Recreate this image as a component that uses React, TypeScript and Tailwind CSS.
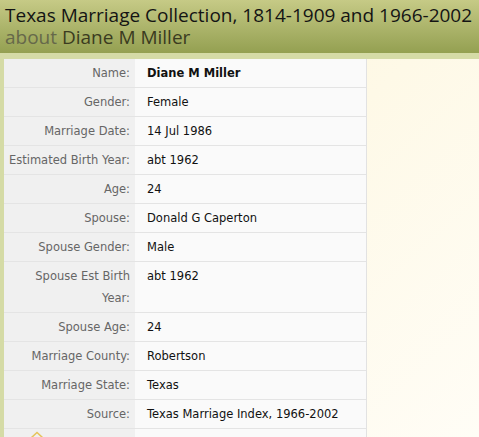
import React from 'react'

const rows: { label: string; value: string; bold?: boolean }[] = [
  { label: 'Name:', value: 'Diane M Miller', bold: true },
  { label: 'Gender:', value: 'Female' },
  { label: 'Marriage Date:', value: '14 Jul 1986' },
  { label: 'Estimated Birth Year:', value: 'abt 1962' },
  { label: 'Age:', value: '24' },
  { label: 'Spouse:', value: 'Donald G Caperton' },
  { label: 'Spouse Gender:', value: 'Male' },
  { label: 'Spouse Est Birth Year:', value: 'abt 1962' },
  { label: 'Spouse Age:', value: '24' },
  { label: 'Marriage County:', value: 'Robertson' },
  { label: 'Marriage State:', value: 'Texas' },
  { label: 'Source:', value: 'Texas Marriage Index, 1966-2002' },
]

export default function App() {
  return (
    <div className="w-[479px] h-[437px] overflow-hidden bg-gradient-to-br from-[#fdf5d8] to-[#fffdf6] font-['DejaVu_Sans',sans-serif]">
      <div className="h-[53px] bg-gradient-to-b from-[#c6ca86] to-[#94a051] px-[5px] pt-[4px] font-['Open_Sans',sans-serif] text-[19px] leading-[22px] whitespace-nowrap">
        <div className="text-[#141414]">Texas Marriage Collection, 1814-1909 and 1966-2002</div>
        <div>
          <span className="text-[#66684a]">about</span>{' '}
          <span className="text-[#3a3b20]">Diane M Miller</span>
        </div>
      </div>
      <div className="h-[6px] bg-[#d5dba6]" />
      <div className="flex">
        <div className="w-[4px] self-stretch bg-[#d5dba6]" />
        <div className="w-[363px] border-r border-[#e2e2e2] text-[11.5px]">
          {rows.map(r => (
            <div key={r.label} className="flex border-b border-[#e4e4e4]">
              <div className="w-[131px] shrink-0 bg-[#f0f0f0] pl-[2px] pr-[5px] py-[3px] text-right leading-[22px] text-[#666666]">
                {r.label}
              </div>
              <div className={`flex-1 bg-[#fafafa] pl-[12px] py-[3px] leading-[22px] text-[#111111] ${r.bold ? 'font-bold' : ''}`}>
                {r.value}
              </div>
            </div>
          ))}
          <div className="flex h-[10px]">
            <div className="w-[131px] bg-[#f0f0f0] pl-[26px] pt-[2px]">
              <svg width="14" height="8" viewBox="0 0 14 8">
                <path d="M1 7 L7 1.5 L13 7" fill="none" stroke="#e6c35a" strokeWidth="1.5" />
              </svg>
            </div>
            <div className="flex-1 bg-[#fafafa]" />
          </div>
        </div>
      </div>
    </div>
  )
}
